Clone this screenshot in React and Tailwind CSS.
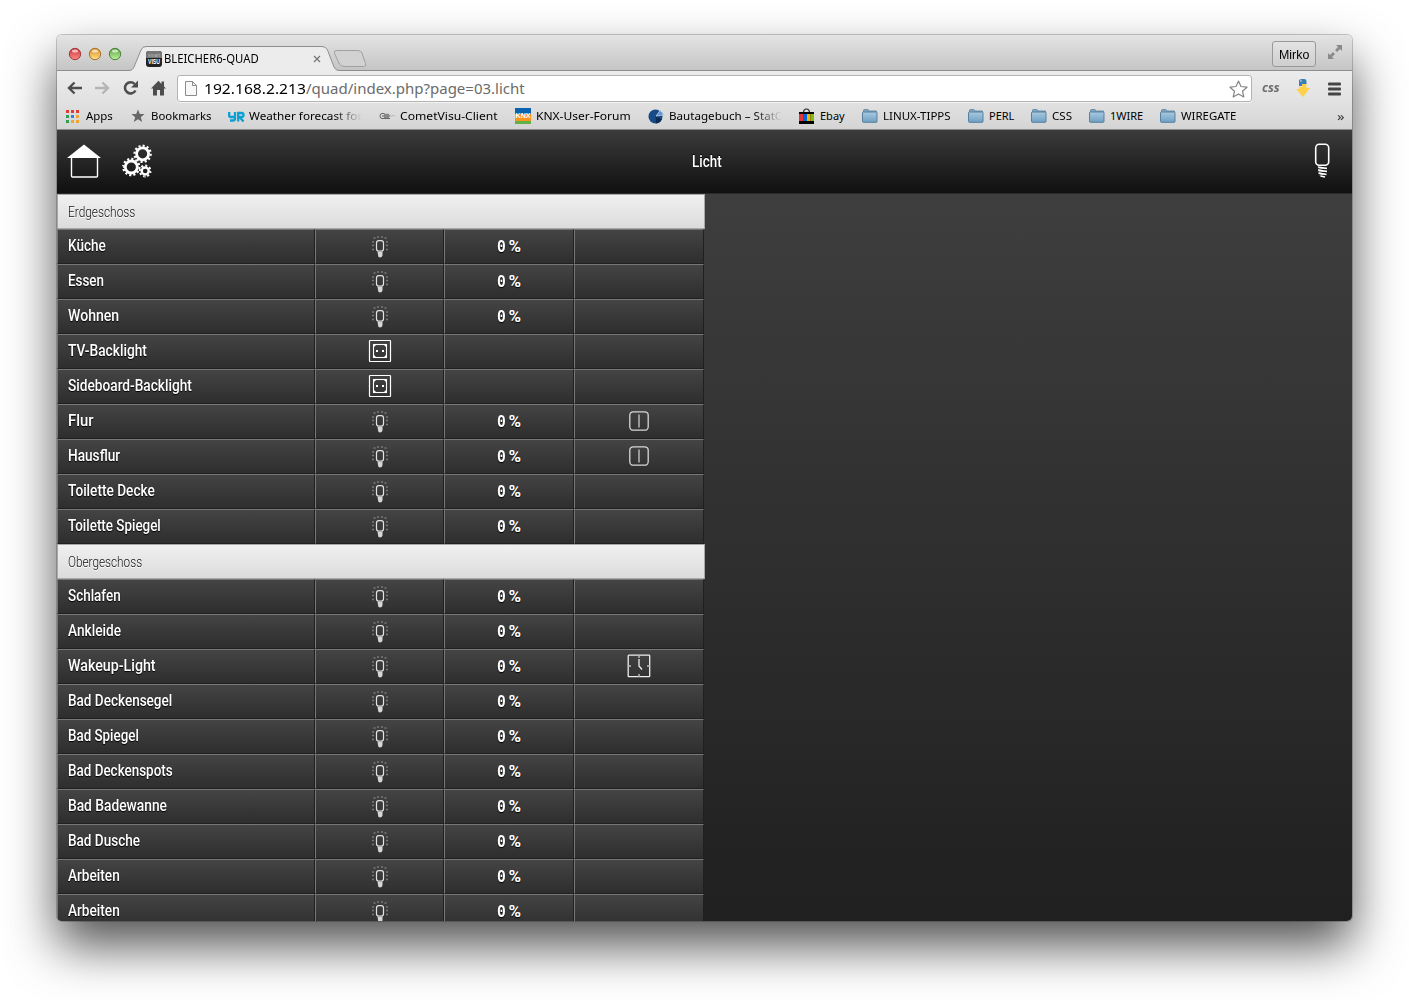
import React, { useLayoutEffect, useRef, useState } from "react";

/* Text set to an exact width by condensing or widening its glyphs. */
function Fit({ w, className = "", children }) {
  const ref = useRef(null);
  const [s, setS] = useState(1);
  useLayoutEffect(() => {
    setS(w / ref.current.offsetWidth);
  }, [w]);
  return (
    <span className="block shrink-0 whitespace-nowrap" style={{ width: w }}>
      <span ref={ref} className={"inline-block origin-left whitespace-nowrap " + className} style={{ transform: `scaleX(${s})` }}>
        {children}
      </span>
    </span>
  );
}

function Light({ id, a, b, rim }) {
  return (
    <svg width="14" height="14" viewBox="0 0 14 14">
      <defs>
        <linearGradient id={id} x1="0" y1="0" x2="0" y2="1">
          <stop offset="0" stopColor={a} />
          <stop offset="1" stopColor={b} />
        </linearGradient>
      </defs>
      <circle cx="7" cy="7" r="5.7" fill={`url(#${id})`} stroke={rim} strokeWidth="1" />
      <ellipse cx="7" cy="4" rx="3" ry="1.6" fill="#fff" opacity=".65" />
    </svg>
  );
}

function TitleBar() {
  return (
    <div className="relative flex h-9 shrink-0 items-center bg-gradient-to-b from-[#e4e4e4] to-[#c4c4c4] pl-[11px]">
      <div className="flex gap-1.5 pt-[2px]">
        <Light id="lr" a="#c8373c" b="#ff8a85" rim="#a23a3c" />
        <Light id="ly" a="#d98a25" b="#ffe28a" rim="#a87326" />
        <Light id="lg" a="#58a33c" b="#c0f0a0" rim="#4b8338" />
      </div>
      <svg className="absolute bottom-0 left-0" width="1295" height="25" viewBox="0 0 1295 25">
        <path d="M277.500 7.500Q276.500 4.500 279.500 4.500H300.500Q304 4.500 305 7L308.500 17.500Q309.500 20.500 306.500 20.500H288Q284 20.500 282.500 18Z" fill="#d2d2d2" stroke="#a0a0a0" />
        <path d="M0 24.500H72C75 24.500 76 23 77 21L84 4Q85.500 .5 89 .5H265Q269 .5 270.500 4L277 21Q278.500 24.500 282 24.500H1295V26H0Z" fill="#ececec" />
        <path d="M0 24.500H72C75 24.500 76 23 77 21L84 4Q85.500 .5 89 .5H265Q269 .5 270.500 4L277 21Q278.500 24.500 282 24.500H1295" fill="none" stroke="#8e8e8e" />
      </svg>
      <div className="relative ml-6 mt-[12px] flex h-4 w-[175px] items-center">
        <svg width="16" height="16" viewBox="0 0 16 16" className="shrink-0">
          <rect width="16" height="16" rx="3" fill="#222" />
          <path d="M0 7V3Q0 0 3 0H13Q16 0 16 3V7Z" fill="#777" />
          <text x="2" y="5.500" fontSize="4.500" fill="#bbb" fontFamily="Liberation Sans" textLength="12" lengthAdjust="spacingAndGlyphs">smart</text>
          <text x="2" y="12.500" fontSize="6.500" fontWeight="bold" fill="#fff" fontFamily="Liberation Sans" textLength="12" lengthAdjust="spacingAndGlyphs">VISU</text>
        </svg>
        <div className="ml-0.5 flex-1 text-[12px] leading-4 text-black"><Fit w={95}>BLEICHER6-QUAD</Fit></div>
        <svg width="8" height="8" viewBox="0 0 8 8"><path d="M1 1L7 7M7 1L1 7" stroke="#777" strokeWidth="1.300" /></svg>
      </div>
      <div className="relative ml-auto mr-3 mt-[2px] flex h-[26px] w-11 items-center justify-center rounded-[3px] border border-[#999] bg-gradient-to-b from-[#e3e3e3] to-[#cecece] pt-px font-['Liberation_Sans'] text-[12px]">
        <Fit w={30}>Mirko</Fit>
      </div>
      <svg className="relative mb-[2px] mr-[10px]" width="14" height="14" viewBox="0 0 14 14" fill="#8a8a8a">
        <path d="M8 0H14V6L12 4L9 7L7 5L10 2ZM0 8V14H6L4 12L7 9L5 7L2 10Z" />
      </svg>
    </div>
  );
}

function Toolbar() {
  return (
    <div className="flex h-[35px] shrink-0 items-center bg-gradient-to-b from-[#ececec] to-[#e0e0e0] pl-[10px]">
      <svg width="100" height="18" viewBox="0 0 100 18" fill="none" className="mb-px shrink-0">
        <path d="M15 9H2M7.500 3.500L2 9L7.500 14.500" stroke="#4d4d4d" strokeWidth="2.400" />
        <path d="M28 9H41M35.500 3.500L41 9L35.500 14.500" stroke="#b5b5b5" strokeWidth="2.400" />
        <path d="M68.500 11.500A5.600 5.600 0 1 1 67.700 5" stroke="#4d4d4d" strokeWidth="2.500" />
        <path d="M71 1.500V8.500H64Z" fill="#4d4d4d" />
        <path d="M84 9.500L91.500 1.800L94.500 5V2.500H97V7.500L99 9.500H97V16.500H93V11H90V16.500H86V9.500Z" fill="#4d4d4d" />
      </svg>
      <div className="ml-[10px] flex h-[27px] w-[1075px] shrink-0 items-center rounded-[3px] border border-[#b3b3b3] bg-white pl-[7px] pr-[3px] shadow-[0_1px_0_#f3f3f3]">
        <svg width="12" height="15" viewBox="0 0 12 15" fill="#f8f8f8" stroke="#8b8b8b">
          <path d="M.5 .5H7.500L11.500 4.500V14.500H.5ZM7.500 .5V4.500H11.500" />
        </svg>
        <div className="mb-[2px] ml-[7px] flex flex-1 text-[15px] leading-[22px]">
          <Fit w={102} className="text-black">192.168.2.213</Fit>
          <Fit w={219} className="text-[#6b6b6b]">/quad/index.php?page=03.licht</Fit>
        </div>
        <svg width="19" height="18" viewBox="0 0 19 18" fill="#fff" stroke="#858585" strokeWidth="1.200">
          <path d="M9.500 1L12 6.500L18 7.200L13.500 11.200L14.800 17L9.500 14L4.200 17L5.500 11.200L1 7.200L7 6.500Z" strokeLinejoin="round" />
        </svg>
      </div>
      <div className="ml-2.5 -mt-1 font-['Open_Sans'] text-[13px] font-bold italic leading-4 text-[#6d6d6d]"><Fit w={18}>css</Fit></div>
      <svg className="mb-[2px] ml-4" width="14" height="20" viewBox="0 0 14 20">
        <path d="M3 8V3Q3 1 6 1H8Q10.500 1 10.500 3V6H6.500V8Z" fill="#3b7fb4" />
        <path d="M3 9H6V6H10.500V10H14L7 19L0 11H3Z" fill="#ffd04a" />
        <circle cx="5" cy="3" r=".7" fill="#fff" />
      </svg>
      <svg className="ml-[18px]" width="13" height="14" viewBox="0 0 13 14" fill="#444">
        <rect y=".5" width="13" height="3" rx="1" /><rect y="5.500" width="13" height="3" rx="1" /><rect y="10.500" width="13" height="3" rx="1" />
      </svg>
    </div>
  );
}

const Folder = () => (
  <svg width="16" height="14" viewBox="0 0 16 14">
    <defs><linearGradient id="fold" x1="0" y1="0" x2="0" y2="1"><stop stopColor="#a9cae1" /><stop offset="1" stopColor="#6f9fc2" /></linearGradient></defs>
    <path d="M1.500 3V1.500Q1.500 .5 2.500 .5H5.500Q6.500 .5 6.500 1.500V2H14.500V4H1.500Z" fill="#7fa5c0" stroke="#56809f" strokeWidth=".8" />
    <rect x=".5" y="3" width="14.500" height="10.300" rx=".8" fill="url(#fold)" stroke="#56809f" />
  </svg>
);

const AppsIcon = () => (
  <svg width="14" height="13" viewBox="0 0 14 13">
    {["#e33b32", "#e33b32", "#e33b32", "#2f9e57", "#3a7de0", "#eda72d", "#2f9e57", "#eda72d", "#eda72d"].map((c, i) => (
      <rect key={i} x={1 + (i % 3) * 5} y={Math.floor(i / 3) * 5} width="3" height="3" fill={c} />
    ))}
  </svg>
);

const StarIcon = () => (
  <svg width="15" height="14" viewBox="0 0 15 14"><path d="M8 .5L9.800 5H14.500L10.800 8.200L12.200 13L8 10.200L3.800 13L5.200 8.200L1.500 5H6.200Z" fill="#666" /></svg>
);

const YrIcon = () => (
  <svg width="17" height="11" viewBox="0 0 17 11" fill="none" stroke="#0b9fd2" strokeWidth="2.300">
    <path d="M1.200 1V4.500Q1.200 6 3 6H7M7 1V7.500Q7 9.500 5 9.500H2M10.200 10.500V2H13.500Q15.500 2 15.500 4T13.500 6H11.500L15.500 10.500" />
  </svg>
);

const CometIcon = () => (
  <svg width="17" height="8" viewBox="0 0 17 8" fill="none" stroke="#888">
    <path d="M5.500 1.500H3Q1 1.500 1 4T3 6.500H11" stroke="#666" /><path d="M3 4H11M5 2.500H10M5 5.300H10" strokeWidth="1.300" /><path d="M11 2.500L12.500 5L14 3L16.500 4.500" stroke="#bbb" />
  </svg>
);

const KnxIcon = () => (
  <svg width="16" height="16" viewBox="0 0 16 16">
    <rect width="16" height="6" fill="#0a63b0" /><rect y="6" width="16" height="7" fill="#f7941d" /><rect y="13" width="16" height="3" fill="#62b146" />
    <text x=".5" y="10.300" fontSize="8" fontWeight="bold" fill="#fff" fontFamily="Liberation Sans" textLength="15" lengthAdjust="spacingAndGlyphs">KNX</text>
  </svg>
);

const PieIcon = () => (
  <svg width="16" height="15" viewBox="0 0 16 15">
    <circle cx="7.500" cy="7.500" r="7" fill="#174a86" /><path d="M7.500 7.500L14 10A7 7 0 0 1 8 14.500Z" fill="#0c2c58" /><path d="M8 7L12 1.500Q15 3.500 15.500 6Z" fill="#5a96dd" stroke="#d9d9d9" strokeWidth=".7" />
  </svg>
);

const EbayIcon = () => (
  <svg width="16" height="16" viewBox="0 0 16 16">
    <path d="M4.500 5Q4.500 1 7.500 1T10.500 5" fill="none" stroke="#222" strokeWidth="1.200" />
    <rect y="4" width="15" height="12" fill="#000" />
    <rect y="6" width="4" height="7" fill="#e53238" /><rect x="4" y="6" width="4" height="7" fill="#0064d2" /><rect x="8" y="6" width="3.500" height="7" fill="#f5af02" /><rect x="11.500" y="6" width="3.500" height="7" fill="#86b817" />
  </svg>
);

const bookmarks = [
  [AppsIcon, "Apps", 27],
  [StarIcon, "Bookmarks", 60],
  [YrIcon, "Weather forecast for", 113, true],
  [CometIcon, "CometVisu-Client", 98],
  [KnxIcon, "KNX-User-Forum", 95],
  [PieIcon, "Bautagebuch – StatC", 113, true],
  [EbayIcon, "Ebay", 25],
  [Folder, "LINUX-TIPPS", 68],
  [Folder, "PERL", 25],
  [Folder, "CSS", 20],
  [Folder, "1WIRE", 33],
  [Folder, "WIREGATE", 55],
];

function Bookmarks() {
  return (
    <div className="flex h-6 shrink-0 items-start gap-[17px] border-b border-[#8a8a8a] bg-gradient-to-b from-[#e0e0e0] to-[#d4d4d4] pl-2 text-[11px] leading-5 text-black">
      {bookmarks.map(([Icon, label, w, fade], i) => (
        <div key={i} className="flex h-5 shrink-0 items-center">
          <div className="flex w-[21px]"><Icon /></div>
          <div className={fade ? "[mask-image:linear-gradient(to_right,black_75%,transparent)]" : ""}><Fit w={w}>{label}</Fit></div>
        </div>
      ))}
      <div className="ml-auto mr-[7px] text-[13px] text-[#333]"><Fit w={8}>»</Fit></div>
    </div>
  );
}

const Gear = ({ cx, cy, r, w, n, t }) => (
  <g fill="none" stroke="#fff">
    <circle cx={cx} cy={cy} r={r} strokeWidth={w} />
    <circle cx={cx} cy={cy} r={r + w / 2 + 0.7} strokeWidth={t} pathLength={n * 2} strokeDasharray="1 1" />
  </g>
);

function Header() {
  return (
    <div className="grid h-16 shrink-0 grid-cols-3 items-center border-b border-[#2a2a2a] bg-gradient-to-b from-[#3c3c3c] to-[#101010] pb-[2px]">
      <div className="flex gap-5 pl-[10px]">
        <svg width="34" height="34" viewBox="0 0 34 34">
          <path d="M0 14L17 .5L34 14Z" fill="#fff" />
          <path d="M4.500 13V32Q4.500 33 5.500 33H29.500Q30.500 33 30.500 32V13" fill="none" stroke="#fff" strokeWidth="1.400" />
        </svg>
        <svg width="34" height="34" viewBox="0 0 34 34">
          <Gear cx={21.600} cy={9.800} r={6} w={2.800} n={12} t={2.200} />
          <Gear cx={10.300} cy={23} r={6} w={2.800} n={12} t={2.200} />
          <Gear cx={24.200} cy={27} r={3.500} w={2.400} n={8} t={2} />
        </svg>
      </div>
      <div className="flex justify-center pl-[5px] font-['Roboto'] text-[17px] font-medium leading-5 text-white [text-shadow:0_-1px_1px_#000]"><Fit w={30}>Licht</Fit></div>
      <div className="flex justify-end pr-[22px]">
        <svg width="16" height="35" viewBox="0 0 16 35" fill="none" stroke="#fff">
          <rect x="1.700" y="1.200" width="13" height="21" rx="3.500" strokeWidth="1.600" />
          <path d="M4 24L13 25.500M4 27L13 28.500M4.500 30L12.500 31.500M6.500 33L11 34" strokeWidth="1.500" />
          <path d="M4.500 26L12.500 25M4.500 29L12.500 28M5.500 32L11.500 31" strokeWidth=".7" />
        </svg>
      </div>
    </div>
  );
}

const Bulb = () => (
  <svg width="18" height="22" viewBox="0 0 18 22" fill="none">
    <path d="M2.500 2H4.500M6 1H8M10 1H12M13.500 2H15.500M1 6H3M1 9.500H3M1 13.500H3M15 6H17M15 9.500H17M15 13.500H17" stroke="#7a7a7a" strokeWidth="1.300" />
    <rect x="5.500" y="4.700" width="7" height="10.300" rx="2.300" stroke="#e2e2e2" strokeWidth="1.200" />
    <path d="M6.500 15.500H11.500V19.500Q11 21.500 9 21.500T7 19Z" fill="#d6d6d6" />
  </svg>
);

const Socket = () => (
  <svg className="mb-px" width="24" height="24" viewBox="0 0 24 24" fill="none" stroke="#fff">
    <rect x="1.500" y="1.500" width="21" height="21" rx=".5" strokeWidth="1.200" />
    <rect x="5.500" y="5.500" width="13" height="13" strokeWidth="1.100" />
    <path d="M5 5H9L5 9ZM19 5H15L19 9ZM5 19H9L5 15ZM19 19H15L19 15Z" fill="#fff" stroke="none" />
    <path d="M8 12H10M14 12H16" strokeWidth="2" />
  </svg>
);

const Switch = () => (
  <svg className="mb-px" width="20" height="20" viewBox="0 0 20 20" fill="none" stroke="#d8d8d8">
    <rect x=".8" y=".8" width="18.400" height="18.400" rx="3.500" strokeWidth="1.300" />
    <path d="M10 3.500V16.500" stroke="#c0c0c0" strokeWidth="1.400" />
  </svg>
);

const Clock = () => (
  <svg className="mb-px" width="24" height="24" viewBox="0 0 24 24" fill="none" stroke="#eee">
    <rect x="1.200" y="1.200" width="21.500" height="21.500" rx=".7" strokeWidth="1.300" />
    <path d="M12 1V4M12 20V23M1 12H4M20 12H23" stroke="#bbb" strokeWidth="1.500" />
    <path d="M12 5V12L15 15.500" strokeWidth="1.300" />
  </svg>
);

const rows = [
  ["Erdgeschoss", 67, "head"],
  ["Küche", 38, "bulb"],
  ["Essen", 36, "bulb"],
  ["Wohnen", 51, "bulb"],
  ["TV-Backlight", 79, "socket"],
  ["Sideboard-Backlight", 124, "socket"],
  ["Flur", 25, "bulb", Switch],
  ["Hausflur", 52, "bulb", Switch],
  ["Toilette Decke", 87, "bulb"],
  ["Toilette Spiegel", 93, "bulb"],
  ["Obergeschoss", 74, "head"],
  ["Schlafen", 53, "bulb"],
  ["Ankleide", 53, "bulb"],
  ["Wakeup-Light", 88, "bulb", Clock],
  ["Bad Deckensegel", 104, "bulb"],
  ["Bad Spiegel", 71, "bulb"],
  ["Bad Deckenspots", 105, "bulb"],
  ["Bad Badewanne", 99, "bulb"],
  ["Bad Dusche", 72, "bulb"],
  ["Arbeiten", 52, "bulb"],
  ["Arbeiten", 52, "bulb"],
];

const cell = "flex h-[35px] items-center justify-center border-b border-l border-r border-t border-b-[#202020] border-l-[#777] border-r-[#202020] border-t-[#777] bg-gradient-to-b from-[#444] to-[#2e2e2e]";

function Row({ row: [label, w, kind, Extra] }) {
  if (kind === "head")
    return (
      <div className="flex h-[35px] shrink-0 items-center border border-[#a8a8a8] bg-gradient-to-b from-[#f0f0f0] to-[#dcdcdc] pl-[10px] font-['Roboto'] text-[14px] font-light leading-5 text-[#111] [text-shadow:0_1px_0_#fff]">
        <Fit w={w}>{label}</Fit>
      </div>
    );
  return (
    <div className="grid shrink-0 grid-cols-[258px_129px_130px_130px]">
      <div className={cell + " !justify-start pb-px pl-[10px] font-['Roboto'] text-[16px] font-medium leading-5 text-white [text-shadow:0_1px_1px_#000]"}>
        <Fit w={w}>{label}</Fit>
      </div>
      <div className={cell}>{kind === "bulb" ? <Bulb /> : <Socket />}</div>
      <div className={cell + " gap-[3px] pb-px text-[17px] leading-5 text-white [text-shadow:0_1px_1px_#000]"}>
        {kind === "bulb" && (
          <>
            <Fit w={9} className="font-['Liberation_Mono'] text-[18px] font-bold">0</Fit>
            <Fit w={13} className="font-['Roboto'] font-bold">%</Fit>
          </>
        )}
      </div>
      <div className={cell}>{Extra && <Extra />}</div>
    </div>
  );
}

export default function App() {
  return (
    <div className="h-[1000px] w-[1409px] overflow-hidden bg-white pl-[57px] pt-[35px] font-['Noto_Sans','Open_Sans',sans-serif]">
      <div className="h-[886px] w-[1295px] rounded-[5px] shadow-[0_25px_50px_rgba(0,0,0,0.68),0_0_0_1px_rgba(0,0,0,0.2)]">
        <div className="flex h-full flex-col overflow-hidden rounded-[5px]">
          <TitleBar />
          <Toolbar />
          <Bookmarks />
          <Header />
          <div className="min-h-0 flex-1 overflow-hidden bg-gradient-to-b from-[#3e3e3e] to-[#202020]">
            <div className="flex w-[648px] flex-col">
              {rows.map((r, i) => <Row key={i} row={r} />)}
            </div>
          </div>
        </div>
      </div>
    </div>
  );
}
